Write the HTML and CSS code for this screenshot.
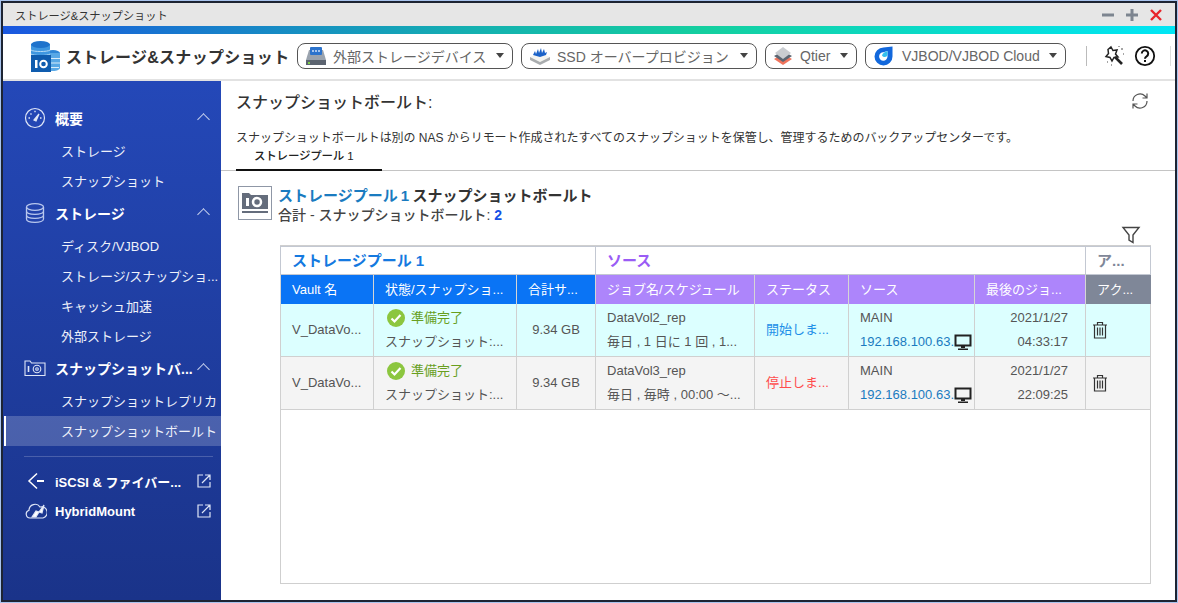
FILE: index.html
```html
<!DOCTYPE html>
<html lang="ja">
<head>
    <meta charset="UTF-8">
    <meta name="viewport" content="width=device-width, initial-scale=1.0">
    <title>ストレージ&スナップショット</title>
    <link rel="stylesheet" href="styles.css">
</head>
<body>
    <div class="window">
        <div class="titlebar">
            <span class="titlebar-text">ストレージ&amp;スナップショット</span>
            <div class="window-controls">
                <svg width="14" height="14" viewBox="0 0 14 14"><rect x="1" y="5.5" width="12" height="3" fill="#7d8590"/></svg>
                <svg width="14" height="14" viewBox="0 0 14 14"><path d="M1 7h12M7 1v12" stroke="#7d8590" stroke-width="3"/></svg>
                <svg width="14" height="14" viewBox="0 0 14 14"><path d="M2 2l10 10M12 2L2 12" stroke="#e8252b" stroke-width="2.4"/></svg>
            </div>
        </div>
        <div class="gradient-bar"></div>

        <div class="toolbar">
            <svg class="app-logo" width="32" height="32" viewBox="0 0 32 32">
                <ellipse cx="24" cy="13" rx="7" ry="3" fill="#2f86d6"/>
                <path d="M17 13h14v15c0 1.500-3 3-7 3h-7z" fill="#58a8e6"/>
                <path d="M21 18.500h10M21 23h10M21 27.500h9" stroke="#d8ecfa" stroke-width="1.200"/>
                <rect x="2" y="4" width="19" height="14" fill="#3f97e0"/>
                <ellipse cx="11.500" cy="4.500" rx="9.500" ry="3.500" fill="#1f73cc"/>
                <path d="M2 10c2 2 17 2 19 0M2 14c2 2 17 2 19 0" fill="none" stroke="#b8dcf5" stroke-width="1"/>
                <rect x="2" y="15" width="20" height="17" fill="#0f5cae"/>
                <rect x="6" y="20" width="2.500" height="8" fill="#fff"/>
                <circle cx="14.500" cy="24" r="3.300" fill="none" stroke="#fff" stroke-width="2"/>
            </svg>
            <span class="app-title">ストレージ&amp;スナップショット</span>
            <div class="tool-btn btn-external">
                <svg width="22" height="22" viewBox="0 0 22 22"><path d="M4 5h14l3 10v3H1v-3z" fill="#9aa3ae"/><rect x="5" y="2" width="12" height="8" rx="1" fill="#2c73cc"/><path d="M7 6h8" stroke="#cfe2fa" stroke-width="1.500" stroke-dasharray="2 1"/><rect x="1" y="15" width="20" height="5" fill="#5c6470"/><rect x="3" y="17" width="2" height="2" fill="#7fd04a"/></svg>
                <span>外部ストレージデバイス</span><i class="caret"></i>
            </div>
            <div class="tool-btn btn-ssd">
                <svg width="22" height="20" viewBox="0 0 22 20"><path d="M1 11l10-4 10 4-10 5z" fill="#f4f4f0"/><path d="M1 11v3l10 5 10-5v-3l-10 5z" fill="#a9acae"/><path d="M4 9l2-4 1 3 2-5 1 4 2-5 1 5 2-4 1 4 2-1-1 3-6 2-7-2z" fill="#1b62c8"/></svg>
                <span>SSD オーバープロビジョン</span><i class="caret"></i>
            </div>
            <div class="tool-btn btn-qtier">
                <svg width="20" height="20" viewBox="0 0 20 20"><path d="M1 13l9-5 9 5-9 6z" fill="#f0745c"/><path d="M1 10l9-5 9 5-9 6z" fill="#5c6672"/><path d="M2 7l8-6 8 6-8 6z" fill="#c9ccd0"/></svg>
                <span>Qtier</span><i class="caret"></i>
            </div>
            <div class="tool-btn btn-vjbod">
                <svg width="20" height="20" viewBox="0 0 20 20"><path d="M19.500 .5v10a9 9 0 1 1-9-9z" fill="#1268dc"/><path d="M14.500 5v5.500a4.200 4.200 0 1 1-4.200-4.200z" fill="#fff"/><path d="M14.500 5v4a3 3 0 0 1-5.500.500c.5-2 2.500-4 5.500-4.500z" fill="#35c0ee"/></svg>
                <span>VJBOD/VJBOD Cloud</span><i class="caret"></i>
            </div>
            <div class="toolbar-sep"></div>
            <svg class="wand" width="24" height="24" viewBox="0 0 24 24" fill="none" stroke="#222" stroke-width="1.5"><path d="M9 3l2 3.5 4-.5-1.5 4 2.5 3-4 .5-2 3.5-2-3.5-4-1 2.5-3-.5-4z"/><path d="M13 13l7 7" stroke-width="2.6"/><path d="M19 5h2M21 10h1M5 18h1M9 21h1M17 2v1" stroke="#888"/></svg>
            <svg class="help" width="22" height="22" viewBox="0 0 22 22"><circle cx="11" cy="11" r="9.2" fill="none" stroke="#111" stroke-width="1.8"/><path d="M7.8 8.5a3.2 3.2 0 1 1 4.8 2.8c-1 .6-1.6 1.2-1.6 2.4" fill="none" stroke="#111" stroke-width="2"/><rect x="10" y="15" width="2" height="2" fill="#111"/></svg>
            <div class="toolbar-sep sep-end"></div>
        </div>

        <div class="main">
            <nav class="sidebar">
                <div class="nav-group">
                    <svg width="22" height="22" viewBox="0 0 22 22" fill="none" stroke="#dfe6f7" stroke-width="1.2"><circle cx="11" cy="11" r="9.5"/><path d="M10 13l5-6-3 7z" fill="#dfe6f7"/><path d="M4.5 11h1.5M6.5 6.5l1 1M11 3.7v1.5M17.5 11H16" stroke-width="1.4"/></svg>
                    <span class="nav-label">概要</span><i class="chevron"></i>
                </div>
                <a class="nav-item">ストレージ</a>
                <a class="nav-item">スナップショット</a>

                <div class="nav-group">
                    <svg width="22" height="22" viewBox="0 0 22 22" fill="none" stroke="#b9c8ee" stroke-width="1.3"><ellipse cx="11" cy="5" rx="8.5" ry="3.3"/><path d="M2.5 5v12c0 2 3.8 3.4 8.5 3.4s8.500-1.400 8.500-3.400V5M2.500 9c0 2 3.800 3.300 8.500 3.300S19.500 11 19.500 9M2.500 13c0 2 3.800 3.300 8.500 3.300s8.500-1.300 8.500-3.300"/></svg>
                    <span class="nav-label">ストレージ</span><i class="chevron"></i>
                </div>
                <a class="nav-item">ディスク/VJBOD</a>
                <a class="nav-item">ストレージ/スナップショ...</a>
                <a class="nav-item">キャッシュ加速</a>
                <a class="nav-item">外部ストレージ</a>

                <div class="nav-group">
                    <svg width="22" height="18" viewBox="0 0 22 18" fill="none" stroke="#dfe6f7" stroke-width="1.1"><path d="M1 16.500V2h5l1.500 2h13.500v12.500z"/><path d="M4.500 7v6" stroke-width="1.600"/><circle cx="13" cy="10" r="3.800"/><circle cx="13" cy="10" r="1.300"/></svg>
                    <span class="nav-label">スナップショットバ...</span><i class="chevron"></i>
                </div>
                <a class="nav-item">スナップショットレプリカ</a>
                <a class="nav-item is-active">スナップショットボールト</a>

                <div class="nav-sep"></div>

                <div class="nav-link">
                    <svg width="22" height="20" viewBox="0 0 22 20" fill="none" stroke="#fff" stroke-width="1.500"><path d="M12 2.500L4 10l8 7.500"/><path d="M12 10h7" stroke-width="2"/></svg>
                    <span class="nav-link-label">iSCSI &amp; ファイバー...</span>
                    <svg class="ext" width="14" height="14" viewBox="0 0 14 14" fill="none" stroke="#dfe6f7" stroke-width="1.200"><path d="M6 1H1v12h12V8M5 9l8-8M8 1h5v5"/></svg>
                </div>
                <div class="nav-link">
                    <svg width="22" height="16" viewBox="0 0 22 16" fill="none" stroke="#dfe6f7" stroke-width="1.200"><path d="M5 15a4 4 0 0 1-1-7.800A6 6 0 0 1 15 4a5.500 5.500 0 0 1 3 11z"/><path d="M7 14l4-6 3 1 5-7-2 8-3-1-3 5z" fill="#fff"/></svg>
                    <span class="nav-link-label hybrid">HybridMount</span>
                    <svg class="ext" width="14" height="14" viewBox="0 0 14 14" fill="none" stroke="#dfe6f7" stroke-width="1.200"><path d="M6 1H1v12h12V8M5 9l8-8M8 1h5v5"/></svg>
                </div>
            </nav>

            <section class="content">
                <div class="page-head">
                    <h1>スナップショットボールト:</h1>
                    <svg width="20" height="20" viewBox="0 0 20 20" fill="none" stroke="#555" stroke-width="1.200"><path d="M3 10a7 7 0 0 1 12-5l2 2M17 2.500V7h-4.500M17 10a7 7 0 0 1-12 5l-2-2M3 17.500V13h4.500"/></svg>
                </div>
                <p class="page-desc">スナップショットボールトは別の NAS からリモート作成されたすべてのスナップショットを保管し、管理するためのバックアップセンターです。</p>
                <div class="tabs"><div class="tab">ストレージプール 1</div></div>

                <div class="pool-head">
                    <div class="pool-icon">
                        <svg width="28" height="26" viewBox="0 0 28 26"><path d="M1 19V3h7l2 2h17v14z" fill="#656d7c"/><rect x="1" y="21" width="26" height="2" fill="#656d7c"/><rect x="5" y="8" width="3" height="8" fill="#fff"/><circle cx="16" cy="12" r="4" fill="none" stroke="#fff" stroke-width="2.500"/></svg>
                    </div>
                    <div>
                        <div class="pool-title"><span class="pool-name">ストレージプール 1</span> スナップショットボールト</div>
                        <div class="pool-total">合計 - スナップショットボールト: <b>2</b></div>
                    </div>
                </div>

                <div class="filter-row">
                    <svg width="20" height="20" viewBox="0 0 20 20" fill="none" stroke="#444" stroke-width="1.400"><path d="M2 2.500h16l-6 7.500v7.500l-4-2.500v-5z"/></svg>
                </div>

                <div class="table-frame">
                    <table class="vault-table">
                        <colgroup>
                            <col class="col-1"><col class="col-2"><col class="col-3"><col class="col-4">
                            <col class="col-5"><col class="col-6"><col class="col-7"><col class="col-8">
                        </colgroup>
                        <thead>
                            <tr class="group-row">
                                <th colspan="3" class="group-blue">ストレージプール 1</th>
                                <th colspan="4" class="group-purple">ソース</th>
                                <th class="group-grey">ア...</th>
                            </tr>
                            <tr class="head-row">
                                <th class="h-blue">Vault 名</th>
                                <th class="h-blue">状態/スナップショ...</th>
                                <th class="h-blue">合計サ...</th>
                                <th class="h-purple">ジョブ名/スケジュール</th>
                                <th class="h-purple">ステータス</th>
                                <th class="h-purple">ソース</th>
                                <th class="h-purple">最後のジョ...</th>
                                <th class="h-grey">アク...</th>
                            </tr>
                        </thead>
                        <tbody>
                            <tr class="row-cyan">
                                <td>V_DataVo...</td>
                                <td>
                                    <div class="ready"><svg width="18" height="18" viewBox="0 0 18 18"><circle cx="9" cy="9" r="9" fill="#8cc63f"/><path d="M4.500 9.500l3 3 6-6.500" fill="none" stroke="#fff" stroke-width="2.200"/></svg>準備完了</div>
                                    <div class="line-2">スナップショット:...</div>
                                </td>
                                <td class="center">9.34 GB</td>
                                <td>DataVol2_rep<div class="line-2">毎日 , 1 日に 1 回 , 1...</div></td>
                                <td class="status-start">開始しま...</td>
                                <td>MAIN<div class="line-2 source-ip">192.168.100.63.<svg width="18" height="18" viewBox="0 0 18 18"><path d="M1.500 2.500h15v10h-15z" fill="none" stroke="#222" stroke-width="2"/><path d="M7 13h4v2H7zM4 15.500h10v1.500H4z" fill="#222"/></svg></div></td>
                                <td class="date">2021/1/27<div class="line-2">04:33:17</div></td>
                                <td><svg class="trash" width="16" height="18" viewBox="0 0 16 18" fill="none" stroke="#333" stroke-width="1.200"><path d="M1 4h14M5.500 4V1.500h5V4M2.500 4v13h11V4M5.500 6.500v8M8 6.500v8M10.500 6.500v8"/></svg></td>
                            </tr>
                            <tr class="row-grey">
                                <td>V_DataVo...</td>
                                <td>
                                    <div class="ready"><svg width="18" height="18" viewBox="0 0 18 18"><circle cx="9" cy="9" r="9" fill="#8cc63f"/><path d="M4.500 9.500l3 3 6-6.500" fill="none" stroke="#fff" stroke-width="2.200"/></svg>準備完了</div>
                                    <div class="line-2">スナップショット:...</div>
                                </td>
                                <td class="center">9.34 GB</td>
                                <td>DataVol3_rep<div class="line-2">毎日 , 毎時 , 00:00 ～...</div></td>
                                <td class="status-stop">停止しま...</td>
                                <td>MAIN<div class="line-2 source-ip">192.168.100.63.<svg width="18" height="18" viewBox="0 0 18 18"><path d="M1.500 2.500h15v10h-15z" fill="none" stroke="#222" stroke-width="2"/><path d="M7 13h4v2H7zM4 15.500h10v1.500H4z" fill="#222"/></svg></div></td>
                                <td class="date">2021/1/27<div class="line-2">22:09:25</div></td>
                                <td><svg class="trash" width="16" height="18" viewBox="0 0 16 18" fill="none" stroke="#333" stroke-width="1.200"><path d="M1 4h14M5.500 4V1.500h5V4M2.500 4v13h11V4M5.500 6.500v8M8 6.500v8M10.500 6.500v8"/></svg></td>
                            </tr>
                        </tbody>
                    </table>
                </div>
            </section>
        </div>
    </div>
</body>
</html>
```

FILE: styles.css
```css
* {
    box-sizing: border-box;
}
html, body {
    height: 100%;
}
body {
    margin: 0;
    padding: 1px;
    background-color: #a9c4ee;
    font-family: "Liberation Sans", "Noto Sans CJK JP", sans-serif;
    font-size: 13px;
    color: #444;
    overflow: hidden;
}
.window {
    height: 100%;
    display: flex;
    flex-direction: column;
    border: 2px solid #1d2433;
    background-color: #fff;
}

/* title bar */
.titlebar {
    height: 23px;
    flex: none;
    display: flex;
    align-items: center;
    justify-content: space-between;
    padding: 0 12px 0 12px;
    background-color: #e6e6e6;
}
.titlebar-text {
    font-size: 11.2px;
    color: #333;
}
.window-controls {
    display: flex;
    gap: 10px;
}
.gradient-bar {
    height: 8px;
    flex: none;
    background: linear-gradient(90deg, #1a57e0 0%, #14b0b0 40%, #14cf9f 60%, #00e6f5 100%);
}

/* toolbar */
.toolbar {
    height: 47px;
    flex: none;
    display: flex;
    align-items: center;
    padding: 0 0 2px 26px;
    border-bottom: 2px solid #e2e2e2;
}
.app-title {
    margin-left: 5px;
    font-size: 16px;
    font-weight: 700;
    letter-spacing: 0.3px;
    color: #333;
    width: 231px;
    white-space: nowrap;
}
.tool-btn {
    height: 26px;
    display: flex;
    align-items: center;
    margin-right: 8px;
    padding: 0 8px 0 7px;
    border: 1px solid #555;
    border-radius: 8px;
    font-size: 14px;
    color: #666;
    white-space: nowrap;
}
.tool-btn svg {
    margin-right: 6px;
    flex: none;
}
.btn-external { width: 216px; }
.btn-ssd { width: 236px; }
.btn-qtier { width: 92px; }
.btn-qtier svg { margin-right: 7px; }
.btn-vjbod { width: 201px; }
.btn-vjbod svg { margin-right: 9px; }
.caret {
    margin-left: auto;
    border-left: 4px solid transparent;
    border-right: 4px solid transparent;
    border-top: 5px solid #444;
}
.toolbar-sep {
    width: 1px;
    height: 20px;
    margin-left: 12px;
    background-color: #bbb;
}
.toolbar-sep.sep-end {
    margin-left: 14px;
    background-color: #ddd;
}
.wand {
    margin-left: 15px;
}
.help {
    margin-left: 8px;
}

/* sidebar */
.main {
    flex: 1;
    display: flex;
    min-height: 0;
}
.sidebar {
    width: 218px;
    flex: none;
    padding-top: 23px;
    background: linear-gradient(180deg, #2448b8 0%, #1a3389 100%);
    color: #fff;
}
.nav-group {
    height: 30px;
    margin-top: 3px;
    display: flex;
    align-items: center;
    padding: 0 0 2px 21px;
    position: relative;
}
.nav-group:first-child {
    margin-top: 0;
}
.nav-group svg {
    width: 22px;
    flex: none;
}
.nav-label {
    margin-left: 9px;
    font-size: 14px;
    font-weight: 700;
    white-space: nowrap;
}
.chevron {
    position: absolute;
    right: 13px;
    top: 11px;
    width: 9px;
    height: 9px;
    border-left: 1px solid #c8d2ee;
    border-top: 1px solid #c8d2ee;
    transform: rotate(45deg);
}
.nav-group + .nav-item {
    margin-top: 2px;
}
.nav-item {
    display: block;
    height: 30px;
    line-height: 32px;
    padding-left: 58px;
    font-size: 13px;
    color: #eef1fa;
    white-space: nowrap;
}
.nav-item.is-active {
    padding-left: 55px;
    border-left: 2px solid #fff;
    margin-left: 1px;
    background-color: rgba(255, 255, 255, 0.2);
}
.nav-sep {
    height: 1px;
    margin: 10px 8px 9px 21px;
    background-color: rgba(255, 255, 255, 0.2);
}
.nav-link {
    height: 30px;
    display: flex;
    align-items: center;
    padding: 0 10px 0 22px;
}
.nav-link svg {
    flex: none;
}
.nav-link-label {
    margin-left: 8px;
    font-size: 13px;
    font-weight: 700;
    white-space: nowrap;
}
.nav-link .ext {
    margin-left: auto;
}

/* content */
.content {
    flex: 1;
    min-width: 0;
    display: flex;
    flex-direction: column;
    color: #333;
}
.page-head {
    display: flex;
    justify-content: space-between;
    align-items: center;
    padding: 0 27px 0 15px;
    height: 39px;
}
.page-head svg {
    margin-right: -2px;
}
.page-head h1 {
    margin: 0;
    font-size: 16px;
    font-weight: 500;
    color: #333;
}
.page-desc {
    margin: 9px 0 0 15px;
    height: 17px;
    line-height: 19px;
    font-size: 12px;
    letter-spacing: -0.03px;
    color: #333;
    white-space: nowrap;
}
.tabs {
    height: 25px;
    padding-left: 15px;
    border-bottom: 1px solid #c4c4c4;
}
.tab {
    width: 146px;
    height: 25px;
    line-height: 20px;
    padding-left: 18px;
    border-bottom: 2px solid #111;
    font-size: 11.5px;
    letter-spacing: -0.2px;
    font-weight: 500;
    color: #222;
}
.pool-head {
    display: flex;
    gap: 6px;
    padding: 15px 0 0 17px;
    height: 53px;
}
.pool-icon {
    width: 34px;
    height: 34px;
    display: flex;
    align-items: center;
    justify-content: center;
    border: 1px solid #8f97a6;
}
.pool-title {
    font-size: 15px;
    font-weight: 700;
    line-height: 20px;
    word-spacing: -1px;
    color: #333;
}
.pool-name {
    color: #1a7bc0;
}
.pool-total {
    font-size: 14px;
    line-height: 18px;
    font-weight: 500;
    color: #444;
}
.pool-total b {
    color: #1450e6;
}
.filter-row {
    height: 21px;
    padding: 1px 0 0 900px;
}

/* table */
.table-frame {
    width: 871px;
    height: 339px;
    margin-left: 59px;
    border: 1px solid #cfcfcf;
}
.vault-table {
    width: 870px;
    margin-left: -1px;
    table-layout: fixed;
    border-collapse: collapse;
}
.col-1 { width: 93px; }
.col-2 { width: 143px; }
.col-3 { width: 79px; }
.col-4 { width: 159px; }
.col-5 { width: 94px; }
.col-6 { width: 126px; }
.col-7 { width: 111px; }
.col-8 { width: 65px; }
.group-row th {
    height: 28px;
    padding: 0 0 3px 11px;
    text-align: left;
    font-size: 15px;
    font-weight: 700;
    border: 1px solid #c3c8d2;
    background-color: #fff;
}
.group-blue { color: #1479e0; }
.group-purple { color: #9a5cf5; }
.group-grey { color: #7f8798; }
.head-row th {
    height: 29px;
    padding: 0 0 1px 11px;
    text-align: left;
    font-size: 13px;
    font-weight: 400;
    color: #fff;
    white-space: nowrap;
    overflow: hidden;
    border-left: 1px solid #d5d5d5;
}
.h-blue { background-color: #0a74f5; }
.h-purple { background-color: #ad85fb; }
.h-grey { background-color: #7f8798; }
.vault-table td {
    height: 53px;
    padding: 0 0 0 11px;
    font-size: 13px;
    line-height: 24px;
    color: #555;
    white-space: nowrap;
    overflow: hidden;
    border-left: 1px solid #d0d0d0;
    border-bottom: 1px solid #d0d0d0;
}
.row-cyan td { background-color: #dcffff; }
.row-grey td { background-color: #f4f4f4; }
.vault-table td:last-child {
    border-right: 1px solid #d0d0d0;
}
.vault-table td.center {
    text-align: center;
    padding-left: 0;
}
.vault-table td.date {
    text-align: right;
    padding: 0 17px 0 0;
}
.ready {
    display: flex;
    align-items: center;
    gap: 6px;
    margin-left: 2px;
    color: #689f1e;
}
.line-2 {
    white-space: nowrap;
}
.source-ip {
    display: flex;
    align-items: center;
    color: #1a7bc0;
}
.source-ip svg {
    flex: none;
}
.status-start {
    color: #1e8fe8 !important;
}
.status-stop {
    color: #ff4d4d !important;
}
.trash {
    display: block;
    margin: 0 0 0 -5px;
}
```
